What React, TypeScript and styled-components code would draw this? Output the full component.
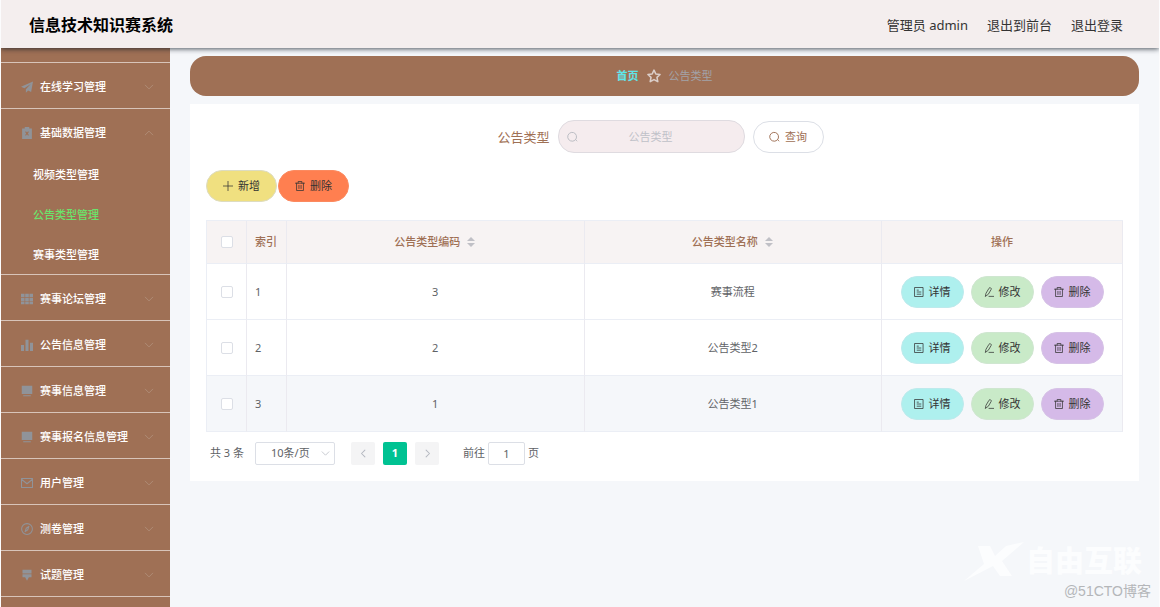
import React from 'react';
import styled, { createGlobalStyle, css } from 'styled-components';

const brown = '#9f7055';

const GlobalStyle = createGlobalStyle`
  * { box-sizing: border-box; }
  body {
    margin: 0;
    background: #f5f7fa;
    color: #606266;
    font-family: "Noto Sans", "Noto Sans CJK SC", sans-serif;
    font-size: 11px;
    line-height: 16px;
  }
  button, input, select { font: inherit; margin: 0; }
  ul { list-style: none; margin: 0; padding: 0; }
  a { color: inherit; text-decoration: none; }
`;

const Shell = styled.div`
  position: relative;
  display: flex;
  flex-direction: column;
  height: 100vh;
  overflow: hidden;
  border: solid #fcfcfd;
  border-width: 0 1px;
`;

const Header = styled.header`
  position: relative;
  z-index: 1;
  flex: none;
  display: flex;
  align-items: center;
  justify-content: space-between;
  height: 48px;
  padding: 1px 36px 0 28px;
  background: #f4eeee;
  box-shadow: 0 1px 5px rgba(20, 30, 40, 0.75);
`;

const Title = styled.h1`
  margin: 0;
  font-size: 16px;
  font-weight: 700;
  line-height: 24px;
  color: #000;
`;

const UserNav = styled.nav`
  display: flex;
  gap: 19px;
  font-size: 13px;
  line-height: 20px;
  color: #333;
`;

const Body = styled.div`
  flex: 1;
  min-height: 0;
  display: flex;
`;

const Sidebar = styled.nav`
  flex: none;
  width: 169px;
  overflow: hidden;
  background: ${brown};
  color: #fff;
`;

const MenuGroup = styled.li`
  border-bottom: 1px solid #d8c4b9;
`;

const MenuTail = styled(MenuGroup)`
  height: 15px;
`;

const MenuButton = styled.button`
  display: flex;
  align-items: center;
  gap: 7px;
  width: 100%;
  height: 45px;
  padding: 2px 16px 0 20px;
  border: 0;
  background: none;
  color: inherit;
  font-weight: 500;
  text-align: left;
  white-space: nowrap;
  > span { flex: 1; }
`;

const SubLink = styled.a<{ $active?: boolean }>`
  display: flex;
  align-items: center;
  height: 40px;
  padding: 2px 0 0 32px;
  font-weight: 500;
  color: ${(p) => (p.$active ? '#6be36b' : '#fff')};
`;

const Svg = styled.svg<{ $size: number; $color?: string }>`
  display: block;
  flex: none;
  width: ${(p) => p.$size}px;
  height: ${(p) => p.$size}px;
  color: ${(p) => p.$color ?? 'currentColor'};
`;

const Main = styled.main`
  flex: 1;
  min-width: 0;
  padding: 8px 20px;
`;

const Breadcrumb = styled.nav`
  display: flex;
  align-items: center;
  justify-content: center;
  gap: 8px;
  height: 40px;
  margin-bottom: 8px;
  border-radius: 16px;
  background: ${brown};
  color: #a3a3a8;
  a { color: #5fe6ea; font-weight: 700; }
`;

const Card = styled.section`
  padding: 16px;
  background: #fff;
`;

const SearchForm = styled.form`
  display: flex;
  align-items: center;
  justify-content: center;
  gap: 8px;
  height: 33px;
  padding-right: 8px;
  margin-bottom: 17px;
`;

const SearchLabel = styled.label`
  font-size: 13px;
  color: ${brown};
`;

const SearchField = styled.div`
  display: flex;
  align-items: center;
  gap: 4px;
  width: 187px;
  height: 33px;
  padding: 0 8px;
  border: 1px solid #dfdbe0;
  border-radius: 16px;
  background: #f5ecee;
  input {
    flex: 1;
    min-width: 0;
    padding: 0 16px 0 0;
    border: 0;
    outline: 0;
    background: none;
    text-align: center;
    color: #606266;
  }
  input::placeholder { color: #bfc1c8; opacity: 1; }
`;

type Tone = 'plain' | 'yellow' | 'coral' | 'cyan' | 'green' | 'purple';
const tones: Record<Tone, { bg: string; border: string; text: string }> = {
  plain: { bg: '#fff', border: '#dcdfe6', text: brown },
  yellow: { bg: '#f0e080', border: '#dddcc0', text: '#333' },
  coral: { bg: '#ff7f50', border: '#fb8a60', text: '#333' },
  cyan: { bg: '#aef0ee', border: '#bdeaec', text: '#333' },
  green: { bg: '#c9eac8', border: '#cfe6d0', text: '#333' },
  purple: { bg: '#d5bae8', border: '#d6c2e6', text: '#333' },
};

const PillButton = styled.button<{ $tone: Tone; $compact?: boolean }>`
  display: inline-flex;
  align-items: center;
  justify-content: center;
  gap: 5px;
  width: ${(p) => (p.$compact ? 63 : 71)}px;
  height: 32px;
  padding: 0;
  border: 1px solid ${(p) => tones[p.$tone].border};
  border-radius: 16px;
  background: ${(p) => tones[p.$tone].bg};
  color: ${(p) => tones[p.$tone].text};
`;

const Toolbar = styled.div`
  display: flex;
  gap: 1px;
  margin-bottom: 18px;
`;

const Table = styled.table`
  width: 100%;
  table-layout: fixed;
  border-collapse: separate;
  border-spacing: 0;
  border-left: 1px solid #ebeef5;
  border-top: 1px solid #ebeef5;
`;

const cell = css`
  padding: 0 8px;
  border-right: 1px solid #ebeaf0;
  border-bottom: 1px solid #ebeef5;
  text-align: center;
`;

const Th = styled.th<{ $left?: boolean }>`
  ${cell}
  height: 43px;
  background: #f7f3f3;
  color: ${brown};
  font-weight: 500;
  ${(p) => p.$left && 'text-align: left;'}
`;

const Td = styled.td<{ $left?: boolean }>`
  ${cell}
  height: 56px;
  ${(p) => p.$left && 'text-align: left;'}
`;

const Row = styled.tr<{ $hover?: boolean }>`
  background: ${(p) => (p.$hover ? '#f5f7fa' : '#fff')};
`;

const Col = styled.col<{ $w?: number }>`
  ${(p) => p.$w && `width: ${p.$w}px;`}
`;

const Tick = styled.input`
  appearance: none;
  display: block;
  width: 12px;
  height: 12px;
  margin: 0 auto;
  border: 1px solid #dcdfe6;
  border-radius: 2px;
  background: #fff;
`;

const Sortable = styled.span`
  display: inline-flex;
  align-items: center;
  gap: 6px;
`;

const Actions = styled.div`
  display: flex;
  justify-content: center;
  gap: 7px;
`;

const Pager = styled.div`
  display: flex;
  align-items: center;
  height: 24px;
  margin: 9px 4px 0;
`;

const SizePicker = styled.div`
  position: relative;
  width: 80px;
  margin: 0 16px 0 11px;
  select {
    appearance: none;
    display: block;
    width: 100%;
    height: 23px;
    padding: 0 0 0 15px;
    border: 1px solid #dcdfe6;
    border-radius: 2px;
    background: #fff;
    color: #606266;
  }
  svg {
    position: absolute;
    right: 5px;
    top: 7px;
    pointer-events: none;
  }
`;

const PageButton = styled.button<{ $active?: boolean }>`
  display: flex;
  align-items: center;
  justify-content: center;
  width: 24px;
  height: 23px;
  margin-right: 8px;
  padding: 0;
  border: 0;
  border-radius: 2px;
  background: ${(p) => (p.$active ? '#00c292' : '#f4f4f5')};
  color: ${(p) => (p.$active ? '#fff' : '#b4b8c0')};
  font-weight: 700;
`;

const Jump = styled.label`
  display: flex;
  align-items: center;
  gap: 3px;
  margin-left: 16px;
  input {
    width: 37px;
    height: 23px;
    padding: 0;
    border: 1px solid #dcdfe6;
    border-radius: 2px;
    text-align: center;
    color: #606266;
  }
`;

const Ghost = styled.div`
  position: absolute;
  right: 17px;
  bottom: 24px;
  display: flex;
  align-items: center;
  gap: 2px;
  color: #fcfdfe;
  font-size: 29px;
  font-weight: 900;
  line-height: 32px;
  svg { width: 60px; height: 44px; }
`;

const Credit = styled.div`
  position: absolute;
  right: 8px;
  bottom: 8px;
  font-family: "Liberation Sans", "Noto Sans CJK SC", sans-serif;
  font-size: 14px;
  line-height: 16px;
  color: #b4b6b9;
`;

const line = { fill: 'none', stroke: 'currentColor', strokeLinecap: 'round', strokeLinejoin: 'round' } as const;

const shapes = {
  plane: <path fill="currentColor" d="M16 .5 0 7.500l4.500 2.300L13 4 6.500 11v4.500l3-3 4 2z" />,
  clipboard: (
    <>
      <path fill="currentColor" fillRule="evenodd" d="M1.500 2h13v14h-13zM5.500 6.500 7 8.500l-1.500 2 1 1L8 9.700l1.500 1.800 1-1-1.500-2 1.500-2-1-1L8 7.300 6.500 5.500z" />
      <path fill="currentColor" d="M5 0h6v3H5z" />
    </>
  ),
  grid: <path fill="currentColor" d="M0 1h4.700v4.300H0zM5.600 1h4.800v4.300H5.600zM11.300 1H16v4.300h-4.700zM0 6.200h4.700v4.300H0zM5.600 6.200h4.800v4.300H5.600zM11.300 6.200H16v4.300h-4.700zM0 11.400h4.700V15H0zM5.600 11.400h4.800V15H5.600zM11.300 11.400H16V15h-4.700z" />,
  bars: <path fill="currentColor" d="M0 8h4v8H0zM6 1h4v15H6zM12 5h4v11h-4z" />,
  platform: <path fill="currentColor" d="M1 1h14v11H1zM3 13.500h10V15H3z" />,
  message: <path {...line} strokeWidth="1.400" d="M.7 2h14.600v12H.7zM.7 3 8 9l7.300-6" />,
  compass: (
    <>
      <circle {...line} strokeWidth="1.400" cx="8" cy="8" r="7.200" />
      <path {...line} strokeWidth="1.400" d="m10.500 4.500-1.500 4.500-3.500 2.500L7 7z" />
    </>
  ),
  brush: <path fill="currentColor" d="M2 1h12v5H2zM2 7h12v4h-3.500L8 15.500 5.500 11H2z" />,
  down: <path {...line} strokeWidth="1.300" d="m2 5 6 6 6-6" />,
  up: <path {...line} strokeWidth="1.300" d="m2 11 6-6 6 6" />,
  left: <path {...line} strokeWidth="1.800" d="m10.500 2-6 6 6 6" />,
  right: <path {...line} strokeWidth="1.800" d="m5.500 2 6 6-6 6" />,
  star: <path {...line} strokeWidth="1.800" d="m8 1.300 2.100 4.400 4.800.6-3.500 3.300.9 4.800L8 12.100l-4.300 2.300.9-4.800L1.100 6.300l4.800-.6z" />,
  search: <path {...line} strokeWidth="1.400" d="M12.500 12.700A6.500 6.500 0 1 0 11 14M12.500 12.700l1.800 1.800" />,
  plus: <path {...line} strokeWidth="1.200" d="M8 0v16M0 8h16" />,
  trash: <path {...line} strokeWidth="1.200" d="M.8 3.500h14.400M5 3.500V.8h6v2.700M2.500 3.500v11.700h11V3.500M6.300 7v5M9.700 7v5" />,
  doc: <path {...line} strokeWidth="1.200" d="M1.500.8h13v14.400h-13zM5 5h2M5 8h6M5 11.500h6" />,
  edit: <path {...line} strokeWidth="1.200" d="m3.500 9.500 4.500-7.500q1-1.500 2.600-.6t.8 2.600L7 11.500l-4.400 3.300zM8 15h7.500" />,
};

type IconName = keyof typeof shapes;

const Icon = ({ name, size = 11, color }: { name: IconName; size?: number; color?: string }) => (
  <Svg $size={size} $color={color} viewBox="0 0 16 16" aria-hidden="true">
    {shapes[name]}
  </Svg>
);

const SortIcon = () => (
  <Svg $size={10} $color="#c0c0c6" viewBox="0 0 10 10" aria-hidden="true">
    <path fill="currentColor" d="M5 0 9 4H1zM5 10 1 6h8z" />
  </Svg>
);

interface MenuEntry {
  icon: IconName;
  label: string;
  children?: string[];
}

const menu: MenuEntry[] = [
  { icon: 'plane', label: '在线学习管理' },
  { icon: 'clipboard', label: '基础数据管理', children: ['视频类型管理', '公告类型管理', '赛事类型管理'] },
  { icon: 'grid', label: '赛事论坛管理' },
  { icon: 'bars', label: '公告信息管理' },
  { icon: 'platform', label: '赛事信息管理' },
  { icon: 'platform', label: '赛事报名信息管理' },
  { icon: 'message', label: '用户管理' },
  { icon: 'compass', label: '测卷管理' },
  { icon: 'brush', label: '试题管理' },
];

const rows = [
  { code: '3', name: '赛事流程' },
  { code: '2', name: '公告类型2' },
  { code: '1', name: '公告类型1' },
];

export default function App() {
  return (
    <Shell>
      <GlobalStyle />
      <Header>
        <Title>信息技术知识赛系统</Title>
        <UserNav>
          <span>管理员 admin</span>
          <a href="#front">退出到前台</a>
          <a href="#logout">退出登录</a>
        </UserNav>
      </Header>
      <Body>
        <Sidebar>
          <ul>
            <MenuTail />
            {menu.map((m) => (
              <MenuGroup key={m.label}>
                <MenuButton type="button" aria-expanded={!!m.children}>
                  <Icon name={m.icon} size={12} color="#909399" />
                  <span>{m.label}</span>
                  <Icon name={m.children ? 'up' : 'down'} size={10} color="#b3917d" />
                </MenuButton>
                {m.children?.map((c) => (
                  <SubLink key={c} href="#list" $active={c === '公告类型管理'}>
                    {c}
                  </SubLink>
                ))}
              </MenuGroup>
            ))}
          </ul>
        </Sidebar>
        <Main>
          <Breadcrumb>
            <a href="#home">首页</a>
            <Icon name="star" size={14} color="#dccfca" />
            <span>公告类型</span>
          </Breadcrumb>
          <Card>
            <SearchForm onSubmit={(e) => e.preventDefault()}>
              <SearchLabel htmlFor="type-name">公告类型</SearchLabel>
              <SearchField>
                <Icon name="search" size={11} color="#b9bbc2" />
                <input id="type-name" type="text" placeholder="公告类型" />
              </SearchField>
              <PillButton type="submit" $tone="plain">
                <Icon name="search" />
                查询
              </PillButton>
            </SearchForm>
            <Toolbar>
              <PillButton type="button" $tone="yellow">
                <Icon name="plus" size={10} />
                新增
              </PillButton>
              <PillButton type="button" $tone="coral">
                <Icon name="trash" size={10} />
                删除
              </PillButton>
            </Toolbar>
            <Table>
              <colgroup>
                <Col $w={40} />
                <Col $w={40} />
                <Col />
                <Col />
                <Col $w={241} />
              </colgroup>
              <thead>
                <tr>
                  <Th><Tick type="checkbox" aria-label="全选" /></Th>
                  <Th $left>索引</Th>
                  <Th><Sortable>公告类型编码<SortIcon /></Sortable></Th>
                  <Th><Sortable>公告类型名称<SortIcon /></Sortable></Th>
                  <Th>操作</Th>
                </tr>
              </thead>
              <tbody>
                {rows.map((r, i) => (
                  <Row key={r.code} $hover={i === 2}>
                    <Td><Tick type="checkbox" aria-label={r.name} /></Td>
                    <Td $left>{i + 1}</Td>
                    <Td>{r.code}</Td>
                    <Td>{r.name}</Td>
                    <Td>
                      <Actions>
                        <PillButton type="button" $tone="cyan" $compact><Icon name="doc" size={10} />详情</PillButton>
                        <PillButton type="button" $tone="green" $compact><Icon name="edit" size={10} />修改</PillButton>
                        <PillButton type="button" $tone="purple" $compact><Icon name="trash" size={10} />删除</PillButton>
                      </Actions>
                    </Td>
                  </Row>
                ))}
              </tbody>
            </Table>
            <Pager>
              <span>共 3 条</span>
              <SizePicker>
                <select aria-label="每页条数" defaultValue="10">
                  <option value="10">10条/页</option>
                  <option value="20">20条/页</option>
                </select>
                <Icon name="down" size={9} color="#b4b8c0" />
              </SizePicker>
              <PageButton type="button" aria-label="上一页"><Icon name="left" size={9} /></PageButton>
              <PageButton type="button" $active>1</PageButton>
              <PageButton type="button" aria-label="下一页"><Icon name="right" size={9} /></PageButton>
              <Jump>
                前往
                <input type="text" defaultValue="1" />
                页
              </Jump>
            </Pager>
          </Card>
        </Main>
      </Body>
      <Ghost>
        <svg viewBox="0 0 60 44" aria-hidden="true">
          <path fill="currentColor" d="M0 42 20 25 14 7h12l5 10L42 7l18-4-22 19 10 15H36l-7-10z" />
        </svg>
        <span>自由互联</span>
      </Ghost>
      <Credit>@51CTO博客</Credit>
    </Shell>
  );
}
